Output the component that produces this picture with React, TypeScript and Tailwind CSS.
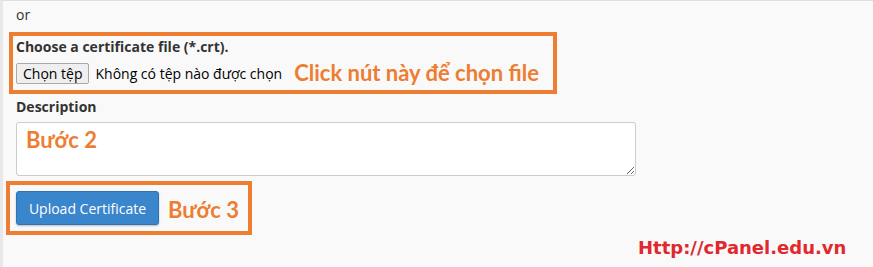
export default function App() {
  return (
    <div className="h-[267px] w-[873px] overflow-hidden border-l-[3px] border-t border-l-[#e8e8e8] border-t-[#dedede] bg-[#f9f9f9] font-['Open_Sans',sans-serif] text-[14px] text-[#333]">
      <div className="pl-[13px] pt-[4px] leading-[20px]">or</div>

      {/* step 1 */}
      <div className="ml-[6px] mt-[7px] w-[548px] border-4 border-[#ed7d31] px-[3px] pb-[6px] pt-px">
        <div className="font-bold leading-[20px]">Choose a certificate file (*.crt).</div>
        <div className="mt-[5px] flex h-[22px] items-center">
          <button className="h-[21px] rounded-[2px] border border-[#a9a9a9] bg-[#efefef] px-[6px] text-[14px] leading-[19px] text-black">
            Chọn tệp
          </button>
          <span className="ml-[6px] text-black">Không có tệp nào được chọn</span>
          <span className="ml-[12px] font-['Lato',sans-serif] text-[22px] font-bold leading-[22px] text-[#ed7d31]">
            Click nút này để chọn file
          </span>
        </div>
      </div>

      {/* step 2 */}
      <div className="pl-[13px] pt-[3px]">
        <div className="font-bold leading-[20px]">Description</div>
        <textarea
          className="mt-[5px] block h-[54px] w-[620px] resize-y rounded-[3px] border border-[#ccc] bg-white px-[9px] py-[4px] font-['Lato',sans-serif] text-[22px] font-bold leading-[26px] text-[#ed7d31] outline-none"
          defaultValue="Bước 2"
        />
      </div>

      {/* step 3 */}
      <div className="ml-[3px] mt-[5px] flex w-[246px] items-center border-4 border-[#ed7d31] py-[6px] pl-[6px]">
        <button className="h-[34px] w-[143px] rounded-[3px] border border-[#2e74b5] bg-[#3a86cc] text-[14px] text-white shadow-[0_1px_2px_rgba(0,0,0,0.25)]">
          Upload Certificate
        </button>
        <span className="ml-[9px] mt-[4px] font-['Lato',sans-serif] text-[22px] font-bold leading-[24px] text-[#ed7d31]">
          Bước 3
        </span>
      </div>

      <div className="mt-[2px] pl-[635px] font-['DejaVu_Sans',sans-serif] text-[18px] font-bold leading-[22px] text-[#e0282e]">
        Http://cPanel.edu.vn
      </div>
    </div>
  );
}
